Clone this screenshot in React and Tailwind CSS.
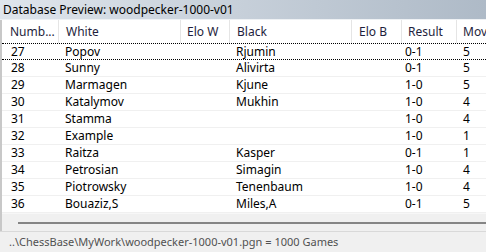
const columns = [
  { label: "Numb...", width: "w-[57px]", pad: "pl-[8px]" },
  { label: "White", width: "w-[122px]", pad: "pl-[7px]" },
  { label: "Elo W", width: "w-[49px]", pad: "pl-[6px]" },
  { label: "Black", width: "w-[122px]", pad: "pl-[7px]" },
  { label: "Elo B", width: "w-[50px]", pad: "pl-[7px]" },
  { label: "Result", width: "w-[55px]", pad: "pl-[6px]" },
  { label: "Mov", width: "w-[60px]", pad: "pl-[6px]" },
];

const games = [
  { nr: 27, white: "Popov", black: "Rjumin", result: "0-1", moves: 5 },
  { nr: 28, white: "Sunny", black: "Alivirta", result: "0-1", moves: 5 },
  { nr: 29, white: "Marmagen", black: "Kjune", result: "1-0", moves: 5 },
  { nr: 30, white: "Katalymov", black: "Mukhin", result: "1-0", moves: 4 },
  { nr: 31, white: "Stamma", black: "", result: "1-0", moves: 4 },
  { nr: 32, white: "Example", black: "", result: "1-0", moves: 1 },
  { nr: 33, white: "Raitza", black: "Kasper", result: "0-1", moves: 1 },
  { nr: 34, white: "Petrosian", black: "Simagin", result: "1-0", moves: 4 },
  { nr: 35, white: "Piotrowsky", black: "Tenenbaum", result: "1-0", moves: 4 },
  { nr: 36, white: "Bouaziz,S", black: "Miles,A", result: "0-1", moves: 5 },
];

function Row({ game, focused }) {
  return (
    <div
      className={
        "flex h-[17px] items-center text-[12px] text-black whitespace-nowrap " +
        (focused ? "border-y border-dotted border-black" : "border-b border-[#f0f0f0]")
      }
    >
      <div className="w-[57px] shrink-0 pl-[9px]">{game.nr}</div>
      <div className="w-[122px] shrink-0 pl-[6px]">{game.white}</div>
      <div className="w-[49px] shrink-0" />
      <div className="w-[122px] shrink-0 pl-[6px]">{game.black}</div>
      <div className="w-[50px] shrink-0" />
      <div className="w-[55px] shrink-0 pl-[3px]">{game.result}</div>
      <div className="w-[60px] shrink-0 pl-[6px]">{game.moves}</div>
    </div>
  );
}

export default function App() {
  return (
    <div className="w-[486px] h-[252px] overflow-hidden flex flex-col bg-[#f0f0f0] font-['Noto_Sans',sans-serif]">
      {/* title bar */}
      <div className="h-[20px] shrink-0 flex items-center pl-[3px] text-[12px] text-black bg-gradient-to-r from-[#dfe5ec] to-[#aebac7] border-b border-[#eef1f4]">
        Database Preview: woodpecker-1000-v01
      </div>

      <div className="flex-1 flex flex-col border-l-2 border-[#c8c8c8] overflow-hidden">
        {/* header */}
        <div className="h-[23px] shrink-0 flex bg-white text-[12px] text-[#1e1e3c]">
          {columns.map((c) => (
            <div
              key={c.label}
              className={`${c.width} ${c.pad} shrink-0 flex items-center border-r border-[#e5e5e5] whitespace-nowrap overflow-hidden`}
            >
              {c.label}
            </div>
          ))}
        </div>

        {/* rows */}
        <div className="bg-white">
          {games.map((g, i) => (
            <Row key={g.nr} game={g} focused={i === 0} />
          ))}
        </div>

        {/* horizontal scrollbar */}
        <div className="h-[19px] shrink-0 flex items-center pl-[16px] bg-[#f0f0f0] border-t border-[#f7f7f7]">
          <div className="flex-1 h-[2px] bg-[#858585]" />
        </div>
      </div>

      {/* status bar */}
      <div className="h-[21px] shrink-0 flex items-center pl-[9px] text-[11px] text-[#505050] border-t border-[#d9d9d9] bg-[#f0f0f0]">
        ..\ChessBase\MyWork\woodpecker-1000-v01.pgn = 1000 Games
      </div>
    </div>
  );
}
